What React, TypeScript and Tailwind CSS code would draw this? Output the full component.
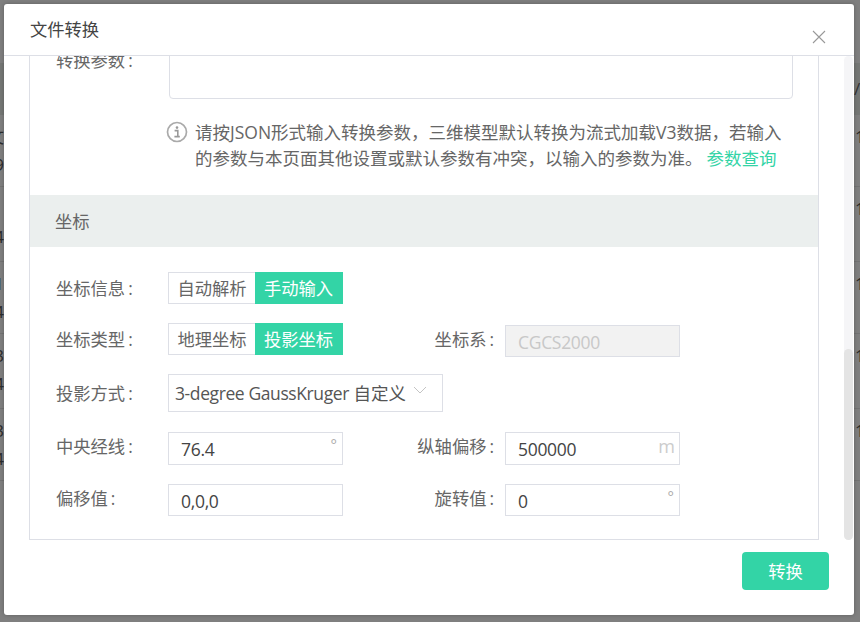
import type { ReactNode } from 'react';

const font = { fontFamily: "'Open Sans', 'Noto Sans CJK SC', sans-serif" };

const backdropRows = [
  { h: 'h-[72px]', left: ['文', '9'], right: '1' },
  { h: 'h-[75px]', left: ['', '4'], right: '1' },
  { h: 'h-[72px]', left: ['1', '4'], right: '1' },
  { h: 'h-[75px]', left: ['3', '4'], right: '1' },
  { h: 'h-[72px]', left: ['3', '4'], right: '1' },
];

function Backdrop() {
  return (
    <div className="absolute inset-0 overflow-hidden bg-[#7f7f7f] text-[17px] text-[#2c2c2c]">
      <div className="mt-[63px] flex h-[52px] items-center justify-end bg-[#757775]">
        <span className="mr-[-4px] w-[10px] text-[#333]">/.</span>
      </div>
      {backdropRows.map((row, i) => (
        <div key={i} className={`flex ${row.h} justify-between border-b border-[#737373]`}>
          <div className="flex w-[4px] flex-col items-end overflow-hidden pt-[8px] leading-[28px]">
            {row.left.map((t, j) => (
              <span key={j} className="h-[28px]">{t || '\u00a0'}</span>
            ))}
          </div>
          <div className="w-[5px] overflow-hidden pt-[8px] leading-[28px]">{row.right}</div>
        </div>
      ))}
    </div>
  );
}

function Label({ children, right, raised }: { children: ReactNode; right?: boolean; raised?: boolean }) {
  return (
    <div className={`flex h-[32px] items-center text-[17.3px] text-[#666] ${raised ? 'pb-[2px]' : 'pt-[2px]'} ${right ? 'w-[162px] justify-end pr-[11px]' : 'w-[112px]'}`}>
      {children}
      <span className="ml-[3px]">:</span>
    </div>
  );
}

function Toggle({ off, on }: { off: string; on: string }) {
  return (
    <div className="flex h-[32px] w-[175px] text-[17.3px]">
      <div className="flex w-[87px] items-center justify-center border border-r-0 border-[#dddfe6] pt-[2px] text-[#666]">{off}</div>
      <div className="flex w-[88px] items-center justify-center bg-[#33d4a6] pr-[1px] pt-[2px] text-white">{on}</div>
    </div>
  );
}

function Field({ value, unit, tall }: { value: string; unit?: string; tall?: boolean }) {
  return (
    <div className={`flex ${tall ? 'h-[33px]' : 'h-[32px]'} w-[175px] items-center justify-between border border-[#dddfe6] pl-[12px] pr-[4px] text-[17.5px] text-[#444]`}>
      <span className="pt-[2px] tracking-[-0.3px]">{value}</span>
      {unit === '°' && <span className="mb-[8px] mr-[1px] text-[15px] leading-none text-[#aaa]">°</span>}
      {unit === 'm' && <span className="mb-[5px] text-[18px] leading-none text-[#ccc]">m</span>}
    </div>
  );
}

function InfoIcon() {
  return (
    <svg width="22" height="22" viewBox="0 0 22 22" fill="none" className="shrink-0">
      <circle cx="11" cy="11" r="9.5" stroke="#aaa" strokeWidth="1.7" />
      <circle cx="11" cy="6.6" r="1.3" fill="#999" />
      <path d="M8.6 9.6h3.2v5.8M8.4 15.6h5.4" stroke="#999" strokeWidth="1.6" />
    </svg>
  );
}

export default function App() {
  return (
    <div className="relative h-[622px] w-[860px] overflow-hidden" style={font}>
      <Backdrop />
      <div className="relative pl-[4px] pt-[4px]">
        <div className="flex h-[611px] w-[850px] flex-col rounded-[3px] bg-white shadow-[0_0_4px_rgba(0,0,0,0.25)]">
          {/* Header */}
          <div className="flex h-[52px] shrink-0 justify-between border-b border-[#dddfe6] pl-[26px] pr-[28px]">
            <div className="pt-[11px] text-[17.3px] leading-[30px] text-[#444]">文件转换</div>
            <svg width="14" height="14" viewBox="0 0 14 14" fill="none" className="mt-[26px]">
              <path d="M1 1l12 12M13 1L1 13" stroke="#999" strokeWidth="1.1" />
            </svg>
          </div>

          {/* Body */}
          <div className="flex h-[484px] shrink-0 overflow-hidden">
            <div className="ml-[25px] h-[484px] w-[790px] shrink-0 overflow-hidden">
              <div className="-mt-[17px] h-[501px] border border-t-0 border-[#dddfe6]">
                <div className="flex h-[60px] pl-[26px]">
                  <div className="flex w-[113px] items-start pt-[8px] text-[17.3px] leading-[28px] text-[#666]">
                    转换参数<span className="ml-[3px]">:</span>
                  </div>
                  <div className="h-[60px] w-[624px] rounded-[4px] border border-[#dddfe6]" />
                </div>

                <div className="ml-[136px] mt-[20px] flex gap-[7px] text-[17.5px] leading-[26px] text-[#666]">
                  <div className="pt-[2px]"><InfoIcon /></div>
                  <div className="whitespace-nowrap">
                    请按JSON形式输入转换参数，三维模型默认转换为流式加载V3数据，若输入
                    <br />
                    的参数与本页面其他设置或默认参数有冲突，以输入的参数为准。
                    <span className="ml-[4px] text-[#33d4a6]">参数查询</span>
                  </div>
                </div>

                <div className="mt-[24px] flex h-[52px] items-center bg-[#ebefee] pl-[25px] pt-[2px] text-[17.3px] text-[#666]">坐标</div>

                <div className="flex flex-col pl-[26px] pt-[25px]">
                  <div className="flex">
                    <Label>坐标信息</Label>
                    <Toggle off="自动解析" on="手动输入" />
                  </div>
                  <div className="mt-[19px] flex h-[32px] items-start">
                    <Label>坐标类型</Label>
                    <Toggle off="地理坐标" on="投影坐标" />
                    <Label right>坐标系</Label>
                    <div className="mt-[2px] flex h-[32px] w-[175px] items-center border border-[#dddfe6] bg-[#f2f2f2] pl-[12px] pt-[2px] text-[17.5px] tracking-[-0.3px] text-[#c8c8c8]">CGCS2000</div>
                  </div>
                  <div className="mt-[19px] flex items-center">
                    <Label>投影方式</Label>
                    <div className="flex h-[38px] w-[275px] items-center justify-between border border-[#dddfe6] pl-[6px] pr-[15px] text-[17.5px] text-[#555]">
                      <span className="whitespace-nowrap">
                        <span className="tracking-[-0.4px]">3-degree GaussKruger</span> 自定义
                      </span>
                      <svg width="14" height="8" viewBox="0 0 14 8" fill="none" className="mb-[6px]">
                        <path d="M1 1l6 6 6-6" stroke="#c4c4c4" strokeWidth="1" />
                      </svg>
                    </div>
                  </div>
                  <div className="mt-[20px] flex">
                    <Label raised>中央经线</Label>
                    <Field value="76.4" unit="°" tall />
                    <Label right raised>纵轴偏移</Label>
                    <Field value="500000" unit="m" tall />
                  </div>
                  <div className="mt-[19px] flex">
                    <Label raised>偏移值</Label>
                    <Field value="0,0,0" />
                    <Label right raised>旋转值</Label>
                    <Field value="0" unit="°" />
                  </div>
                </div>
              </div>
            </div>

            {/* Scrollbar */}
            <div className="ml-[25px] flex h-[484px] w-[9px] flex-col justify-end rounded-[5px] bg-[#f5f5f7]">
              <div className="h-[191px] rounded-[5px] bg-[#e4e4e4]" />
            </div>
          </div>

          {/* Footer */}
          <div className="flex justify-end pr-[25px] pt-[12px]">
            <div className="flex h-[38px] w-[87px] items-center justify-center rounded-[4px] bg-[#33d4a6] pt-[2px] text-[17.3px] text-white">转换</div>
          </div>
        </div>
      </div>
    </div>
  );
}
